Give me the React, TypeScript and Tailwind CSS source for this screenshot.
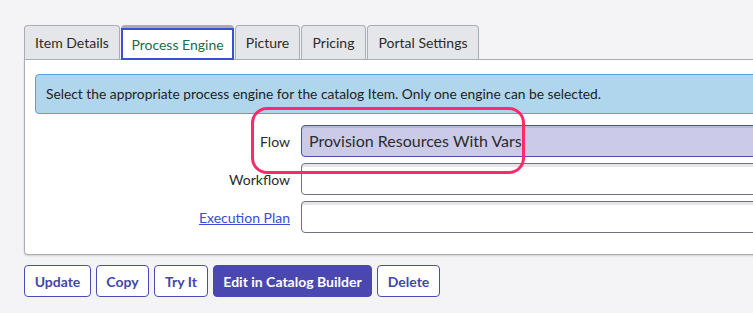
const font = { fontFamily: 'Lato, "Noto Sans", sans-serif' }

const tabs = [
  { label: 'Item Details', w: 'w-[96px]' },
  { label: 'Process Engine', w: 'w-[113px]', active: true },
  { label: 'Picture', w: 'w-[65px]' },
  { label: 'Pricing', w: 'w-[65px]' },
  { label: 'Portal Settings', w: 'w-[112px]' },
]

const inputCls = 'h-[32px] flex-1 border rounded-l-[4px] px-[7px] flex items-center text-[16px] text-[#2b2b2b]'
const labelCls = 'w-[266px] text-right pr-[11px] text-[14px] text-[#2b2b2b]'
const btnCls = 'h-[32px] border border-[#4b4dae] rounded-[4px] bg-white text-[#4346a8]'

export default function App() {
  return (
    <div className="w-[753px] h-[313px] overflow-hidden bg-[#f4f4f6] pl-[24px] pt-[24px] relative" style={font}>
      <div className="flex items-end gap-[1px] h-[35px]">
        {tabs.map(t =>
          t.active ? (
            <div key={t.label} className={`${t.w} h-[35px] bg-white border-t-[3px] border-t-[#a7acb4] rounded-t-[4px] relative z-10 -mb-[1px]`}>
              <div className="h-full border-2 border-[#3b4ed6] flex items-center justify-center text-[14px] text-[#1d6b4a]">{t.label}</div>
            </div>
          ) : (
            <div key={t.label} className={`${t.w} h-[34px] bg-[#e4e6e9] border border-b-0 border-[#a9aeb6] rounded-t-[4px] flex items-center justify-center text-[14px] text-[#2b2b2b]`}>
              {t.label}
            </div>
          )
        )}
      </div>

      <div className="w-[760px] bg-white border-l border-t border-b border-[#a9aeb6] rounded-bl-[4px] shadow-[0_1px_2px_rgba(0,0,0,0.15)] pl-[10px] pt-[14px] pb-[21px]">
        <div className="h-[40px] bg-[#b0d6ee] border border-[#5a9fd8] rounded-l-[4px] px-[10px] flex items-center text-[13.8px] text-[#222]">
          Select the appropriate process engine for the catalog Item. Only one engine can be selected.
        </div>

        <div className="mt-[11px] flex flex-col gap-[6px]">
          <div className="flex items-center">
            <div className={labelCls}>Flow</div>
            <div className={`${inputCls} bg-[#cbcbe9] border-[#4a4fb5] shadow-[inset_0_2px_0_#b9b9d6]`}>Provision Resources With Vars</div>
          </div>
          <div className="flex items-center">
            <div className={labelCls}>Workflow</div>
            <div className={`${inputCls} bg-white border-[#6e737b] shadow-[inset_0_3px_0_#e6e6e6]`}></div>
          </div>
          <div className="flex items-center">
            <div className={labelCls}>
              <span className="text-[#3a4cd6] underline">Execution Plan</span>
            </div>
            <div className={`${inputCls} bg-white border-[#6e737b] shadow-[inset_0_3px_0_#e6e6e6]`}></div>
          </div>
        </div>
      </div>

      <div className="mt-[10px] flex gap-[5px] text-[14px] font-bold">
        <button className={`${btnCls} w-[67px]`}>Update</button>
        <button className={`${btnCls} w-[53px]`}>Copy</button>
        <button className={`${btnCls} w-[54px]`}>Try It</button>
        <button className="w-[159px] h-[32px] border border-[#4a47b0] rounded-[4px] bg-[#4a47b0] text-white">Edit in Catalog Builder</button>
        <button className={`${btnCls} w-[63px]`}>Delete</button>
      </div>

      <div className="mt-[10px] text-[14px] font-bold text-[#2b2b2b]">Related Links</div>

      <div className="absolute left-[251px] top-[107px] w-[274px] h-[67px] border-[3px] border-[#ff2a6a] rounded-[16px] pointer-events-none"></div>
    </div>
  )
}
